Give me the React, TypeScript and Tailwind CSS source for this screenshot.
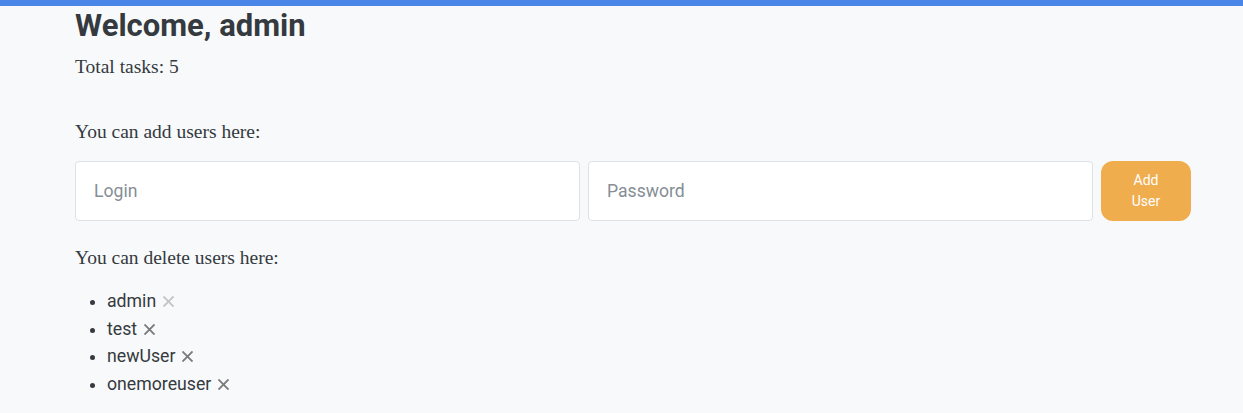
import { useState } from "react";

const serif = { fontFamily: '"Liberation Serif", Georgia, serif' };

/* small cross drawn for the delete button */
const CrossIcon = () => (
  <svg width="11" height="11" viewBox="0 0 10 10" stroke="currentColor" strokeWidth="1.7" strokeLinecap="square">
    <line x1="1" y1="1" x2="9" y2="9" />
    <line x1="9" y1="1" x2="1" y2="9" />
  </svg>
);

const users = ["admin", "test", "newUser", "onemoreuser"];

export default function App() {
  const [login, setLogin] = useState("");
  const [password, setPassword] = useState("");

  return (
    <div className="min-h-[413px] bg-[#f8f9fa] text-[#343a40] font-['Roboto',sans-serif]">
      <div className="h-[6px] bg-[#4a86e8]" />
      <div className="pl-[75px] w-[1191px]">
        <h1 className="text-[31px] font-bold leading-[38px] mt-[1px]">Welcome, admin</h1>
        <p className="text-[19.5px] leading-[24px] mt-[10px]" style={serif}>
          Total tasks: 5
        </p>

        <p className="text-[19.5px] leading-[24px] mt-[41px]" style={serif}>
          You can add users here:
        </p>

        <div className="flex gap-2 mt-[17px]">
          <input
            value={login}
            onChange={(e) => setLogin(e.target.value)}
            placeholder="Login"
            className="flex-1 h-[60px] rounded-[4px] border border-[#dee2e6] bg-white px-[18px] text-[17.6px] placeholder:text-[#868e96] outline-none"
          />
          <input
            type="password"
            value={password}
            onChange={(e) => setPassword(e.target.value)}
            placeholder="Password"
            className="flex-1 h-[60px] rounded-[4px] border border-[#dee2e6] bg-white px-[18px] text-[17.6px] placeholder:text-[#868e96] outline-none"
          />
          <button className="w-[90px] h-[60px] rounded-[12px] bg-[#f0ad4e] text-white text-[14px] leading-[21px] px-6">
            Add User
          </button>
        </div>

        <p className="text-[19.5px] leading-[24px] mt-[25px]" style={serif}>
          You can delete users here:
        </p>

        <ul className="list-disc pl-[32px] mt-[18px] text-[17.7px] leading-[27.5px]">
          {users.map((u, i) => (
            <li key={u}>
              <span className="inline-flex items-center gap-[7px]">
                {u}
                <button className={i === 0 ? "text-[#c4c4c4]" : "text-[#7a7a7a]"}>
                  <CrossIcon />
                </button>
              </span>
            </li>
          ))}
        </ul>
      </div>
    </div>
  );
}
